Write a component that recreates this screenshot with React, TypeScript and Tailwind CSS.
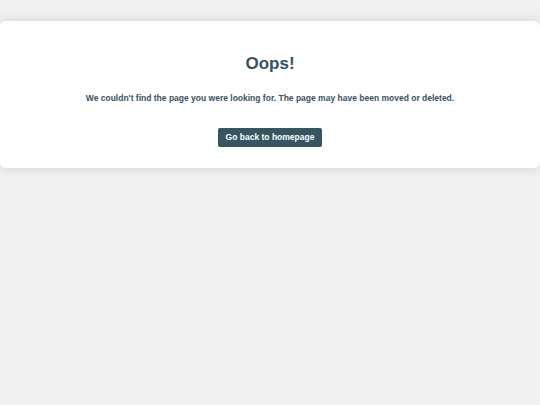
import React from 'react';

export default function App() {
  return (
    <div className="min-h-screen bg-[#f0f0f0] pt-[21px] font-['Liberation_Sans',Arial,sans-serif]">
      <div className="bg-white rounded-md shadow-[0_0_12px_rgba(0,0,0,0.12)] h-[147px] flex flex-col items-center text-[#34525f]">
        <h1 className="mt-[33px] text-[17px] leading-[20px] font-bold">Oops!</h1>
        <p className="mt-[18px] text-[8.5px] leading-[12px] font-bold">
          We couldn't find the page you were looking for. The page may have been moved or deleted.
        </p>
        <button className="mt-[24px] h-[19px] px-[8px] rounded-[2px] bg-[#355561] text-white text-[8.5px] font-bold">
          Go back to homepage
        </button>
      </div>
    </div>
  );
}
